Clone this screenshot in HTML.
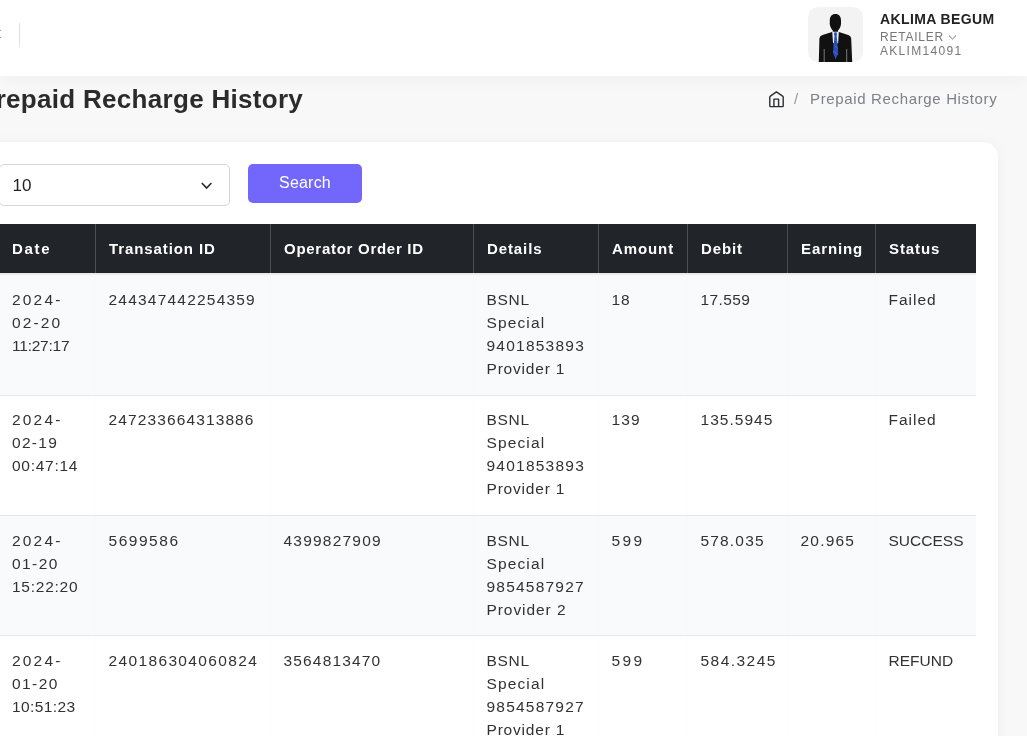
<!DOCTYPE html>
<html><head><meta charset="utf-8">
<style>
*{box-sizing:border-box;margin:0;padding:0}
html,body{width:1027px;height:736px;overflow:hidden}
body{font-family:"Liberation Sans",sans-serif;background:#f8f8f8;position:relative;color:#212529}
.hdr{position:absolute;left:0;top:0;width:1027px;height:75.5px;background:#fff;box-shadow:0 2px 18px rgba(0,0,0,0.045);z-index:2}
.sep{position:absolute;left:19px;top:23px;width:1px;height:24px;background:#e0e0e0}
.m1{position:absolute;left:0;top:29.5px;width:1px;height:1.5px;background:#999}
.m2{position:absolute;left:0;top:36.5px;width:1px;height:1.5px;background:#999}
.avatar{position:absolute;left:808px;top:7px;width:55px;height:55px;border-radius:10px;background:#f3f3f3;overflow:hidden}
.avatar svg{position:absolute;left:0;top:0}
.name{position:absolute;left:880px;top:10.5px;font-size:14px;font-weight:bold;color:#222;letter-spacing:0.38px;white-space:nowrap}
.role{position:absolute;left:880px;top:30px;font-size:12px;color:#777;letter-spacing:0.77px;white-space:nowrap}
.uid{position:absolute;left:880px;top:44px;font-size:12px;color:#777;letter-spacing:1.3px;white-space:nowrap}
.chev{position:absolute;left:948px;top:34px}
.title{position:absolute;left:-22px;top:83.5px;font-size:26px;font-weight:bold;color:#2b2b2b;white-space:nowrap;letter-spacing:0.3px}
.home{position:absolute;left:769px;top:91px}
.slash{position:absolute;left:794px;top:90px;font-size:15px;color:#999}
.bc{position:absolute;left:810px;top:90px;white-space:nowrap;font-size:15px;color:#7d8187;letter-spacing:0.65px}
.card{position:absolute;left:-30px;top:142px;width:1028px;height:700px;background:#fff;border-radius:15px;box-shadow:0 0 14px rgba(0,0,0,0.045)}
.sel{position:absolute;left:-1px;top:164px;width:231px;height:42px;border:1px solid #d6d6d6;border-radius:5px;background:#fff}
.sel span{position:absolute;left:12.5px;top:11px;font-size:17px;color:#222}
.sel svg{position:absolute;left:201px;top:17px}
.btn{position:absolute;left:248px;top:164px;width:114px;height:39px;background:#7367fb;border-radius:5px;color:#fff;font-size:16px;text-align:center;line-height:38px;letter-spacing:0.2px}
table{position:absolute;left:-2px;top:224px;border-collapse:collapse;table-layout:fixed;width:978px}
th{background:#212529;color:#fff;font-size:15px;font-weight:bold;text-align:left;height:49px;padding:0 0 0 13.5px;border-left:1px solid #4a4e52;letter-spacing:0.9px;white-space:nowrap}
td{font-size:15.5px;color:#323232;vertical-align:top;padding:13px 0 0 13px;line-height:23.3px;border-left:1px solid rgba(0,0,0,0.008);border-bottom:1px solid #e4e6e8;letter-spacing:0.9px;white-space:nowrap}
tr.r1 td{padding-top:14.5px}
tr.r2 td{padding-top:12px}
.n{letter-spacing:1.45px}
.u{letter-spacing:0.25px}
tr.s td{background:#f9fafb}
tr td:first-child, tr th:first-child{border-left:none}
td:first-child,th:first-child{padding-left:14px}
.wrap{position:absolute;left:0;top:0;width:1027px;height:736px;will-change:transform}
</style></head><body><div class="wrap">
<div class="hdr">
  <div class="m1"></div><div class="m2"></div>
  <div class="sep"></div>
  <div class="avatar">
    <svg width="55" height="55" viewBox="0 0 55 55">
      <path d="M10.8 55 L11.4 31.5 Q11.6 28.8 14.5 28 L24 25 L31 25 L40.2 28 Q43 28.8 43.2 31.5 L44.2 55 Z" fill="#111"/>
      <path d="M27.4 7 C31 7 33 9.5 33 13.5 C33 15.5 33.3 17 32.6 19 C32 21 30.8 22.5 30 23.5 L30 25.5 L24.8 25.5 L24.8 23.5 C24 22.5 22.8 21 22.2 19 C21.5 17 21.8 15.5 21.8 13.5 C21.8 9.5 23.8 7 27.4 7 Z" fill="#111"/>
      <path d="M24.2 24.8 L30.8 24.8 L30.2 35.5 L27.6 38.5 L25 35.5 Z" fill="#e6ebf5"/>
      <path d="M26.4 25.3 L28.6 25.3 L29 27.8 L28.6 28.4 L30.3 45.5 L27.6 52.5 L24.9 45.5 L26.6 28.4 L26 27.8 Z" fill="#2a4db5"/>
      <path d="M26 32 L29.6 35 M25.6 38 L30 41.5 M25.3 44 L30.3 48" stroke="#4b70d6" stroke-width="0.8"/>
      <path d="M16.2 42 V55 M38.7 42 V55" stroke="#a8a8a8" stroke-width="0.7"/>
    </svg>
  </div>
  <div class="name">AKLIMA BEGUM</div>
  <div class="role">RETAILER</div>
  <svg class="chev" width="9" height="7" viewBox="0 0 9 7"><path d="M1 1.6 L4.5 5 L8 1.6" fill="none" stroke="#777" stroke-width="1"/></svg>
  <div class="uid">AKLIM14091</div>
</div>
<div class="title">Prepaid Recharge History</div>
<svg class="home" width="16" height="17" viewBox="0 0 16 17"><path d="M0.8 14.9 V6.2 Q0.8 5.5 1.4 5.1 L7.4 0.9 L13.6 5.1 Q14.2 5.5 14.2 6.2 V14.9 Q14.2 15.6 13.5 15.6 H1.5 Q0.8 15.6 0.8 14.9 Z M4.9 15.6 V8.1 H9.6 V15.6" fill="none" stroke="#2a2d33" stroke-width="1.4" stroke-linejoin="round"/></svg>
<div class="slash">/</div>
<div class="bc">Prepaid Recharge History</div>
<div class="card"></div>
<div class="sel"><span>10</span>
<svg width="12" height="8" viewBox="0 0 12 8"><path d="M0.8 1 L5.6 6 L10.4 1" fill="none" stroke="#2b2b2b" stroke-width="1.6"/></svg></div>
<div class="btn">Search</div>
<table>
<colgroup><col style="width:97px"><col style="width:175px"><col style="width:203px"><col style="width:125px"><col style="width:89px"><col style="width:100px"><col style="width:88px"><col style="width:101px"></colgroup>
<tr><th style="letter-spacing:1.7px">Date</th><th>Transation ID</th><th style="letter-spacing:0.72px">Operator Order ID</th><th>Details</th><th>Amount</th><th>Debit</th><th>Earning</th><th>Status</th></tr>
<tr class="s r1" style="height:122px"><td><span style="letter-spacing:2.18px">2024-</span><br><span style="letter-spacing:2.12px">02-20</span><br><span style="letter-spacing:-0.23px">11:27:17</span></td><td><span style="letter-spacing:1.21px">244347442254359</span></td><td></td><td><span style="letter-spacing:0.67px">BSNL</span><br><span style="letter-spacing:1.13px">Special</span><br><span style="letter-spacing:1.23px">9401853893</span><br><span style="letter-spacing:0.8px">Provider 1</span></td><td><span style="letter-spacing:1.0px">18</span></td><td><span style="letter-spacing:0.4px">17.559</span></td><td></td><td><span style="letter-spacing:1.0px">Failed</span></td></tr>
<tr class="r2" style="height:120px"><td><span style="letter-spacing:2.18px">2024-</span><br><span style="letter-spacing:1.28px">02-19</span><br><span style="letter-spacing:0.73px">00:47:14</span></td><td><span style="letter-spacing:1.12px">247233664313886</span></td><td></td><td><span style="letter-spacing:0.67px">BSNL</span><br><span style="letter-spacing:1.13px">Special</span><br><span style="letter-spacing:1.23px">9401853893</span><br><span style="letter-spacing:0.8px">Provider 1</span></td><td><span style="letter-spacing:1.1px">139</span></td><td><span style="letter-spacing:1.03px">135.5945</span></td><td></td><td><span style="letter-spacing:1.0px">Failed</span></td></tr>
<tr class="s" style="height:120px"><td><span style="letter-spacing:2.18px">2024-</span><br><span style="letter-spacing:1.43px">01-20</span><br><span style="letter-spacing:0.74px">15:22:20</span></td><td><span style="letter-spacing:1.53px">5699586</span></td><td><span style="letter-spacing:1.21px">4399827909</span></td><td><span style="letter-spacing:0.67px">BSNL</span><br><span style="letter-spacing:1.13px">Special</span><br><span style="letter-spacing:1.21px">9854587927</span><br><span style="letter-spacing:0.93px">Provider 2</span></td><td><span style="letter-spacing:2.4px">599</span></td><td><span style="letter-spacing:1.17px">578.035</span></td><td><span style="letter-spacing:1.2px">20.965</span></td><td><span style="letter-spacing:0.02px">SUCCESS</span></td></tr>
<tr class="" style="height:120px"><td><span style="letter-spacing:2.18px">2024-</span><br><span style="letter-spacing:1.43px">01-20</span><br><span style="letter-spacing:0.41px">10:51:23</span></td><td><span style="letter-spacing:1.36px">240186304060824</span></td><td><span style="letter-spacing:1.17px">3564813470</span></td><td><span style="letter-spacing:0.67px">BSNL</span><br><span style="letter-spacing:1.13px">Special</span><br><span style="letter-spacing:1.21px">9854587927</span><br><span style="letter-spacing:0.8px">Provider 1</span></td><td><span style="letter-spacing:2.4px">599</span></td><td><span style="letter-spacing:1.46px">584.3245</span></td><td></td><td><span style="letter-spacing:0.02px">REFUND</span></td></tr>
</table>
<div style="position:absolute;left:-2px;top:273px;width:978px;height:2px;background:#e9ebee"></div>
</div></body></html>
